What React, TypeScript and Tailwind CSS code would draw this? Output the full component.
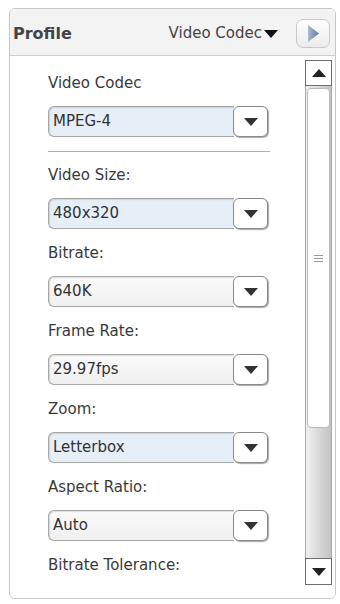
import React from "react";

type Field = {
  label: string;
  value: string;
  blue?: boolean;
};

const FIELDS: Field[] = [
  { label: "Video Size:", value: "480x320", blue: true },
  { label: "Bitrate:", value: "640K" },
  { label: "Frame Rate:", value: "29.97fps" },
  { label: "Zoom:", value: "Letterbox", blue: true },
  { label: "Aspect Ratio:", value: "Auto" },
];

const font = { fontFamily: '"DejaVu Sans", Verdana, sans-serif' };

const DownTriangle: React.FC<{ w?: number; h?: number; color?: string }> = ({
  w = 14,
  h = 8,
  color = "#333",
}) => (
  <svg width={w} height={h} viewBox="0 0 14 8">
    <path d="M0 0 L14 0 L7 8 Z" fill={color} />
  </svg>
);

const Select: React.FC<{ value: string; blue?: boolean }> = ({ value, blue }) => (
  <div className="flex h-[31px] w-[220px]">
    <div
      className={
        "flex-1 flex items-center pl-[4px] rounded-l-[6px] border border-r-0 border-[#a8a8a8] shadow-[inset_1px_1px_1px_rgba(0,0,0,0.12)] text-[15px] text-[#333] " +
        (blue ? "bg-[#e6eef8]" : "bg-gradient-to-b from-[#fbfbfb] to-[#efefef]")
      }
    >
      {value}
    </div>
    <div className="w-[35px] h-full flex items-center justify-center rounded-[6px] border border-[#8a8a8a] bg-white shadow-[1px_1px_1px_rgba(0,0,0,0.35)] -ml-[1px]">
      <DownTriangle />
    </div>
  </div>
);

const Label: React.FC<{ children: React.ReactNode }> = ({ children }) => (
  <div className="h-[20px] leading-[20px] mb-[13px] text-[15px] text-[#3a3a3a] whitespace-nowrap">
    {children}
  </div>
);

const Scrollbar: React.FC = () => (
  <div className="w-[27px] h-[525px] mt-[4px] mr-[3px] flex flex-col shrink-0">
    <div className="h-[26px] border border-[#6f6f6f] bg-white flex items-center justify-center">
      <svg width="14" height="8" viewBox="0 0 14 8">
        <path d="M0 8 L14 8 L7 0 Z" fill="#222" />
      </svg>
    </div>
    <div className="flex-1 flex flex-col border-x border-[#a9a9a9] bg-gradient-to-r from-[#f0f0f0] to-[#c3c3c3]">
      <div className="h-[340px] mt-[2px] mx-[1px] rounded-[4px] border border-[#b9b9b9] bg-white flex items-center justify-center">
        <div className="flex flex-col gap-[2px]">
          <div className="w-[9px] h-px bg-[#9a9a9a]" />
          <div className="w-[9px] h-px bg-[#9a9a9a]" />
          <div className="w-[9px] h-px bg-[#9a9a9a]" />
        </div>
      </div>
    </div>
    <div className="h-[27px] border border-[#6f6f6f] bg-white flex items-center justify-center">
      <DownTriangle color="#222" />
    </div>
  </div>
);

export default function App() {
  return (
    <div className="w-[340px] h-[604px] bg-white pt-[8px] pl-[9px]" style={font}>
      <div className="w-[327px] h-[591px] border border-[#c6c6c6] rounded-[6px] flex flex-col overflow-hidden">
        <div className="h-[47px] shrink-0 bg-[#f3f3f3] border-b border-[#cdcdcd] flex items-center pt-[3px] pl-[3px] pr-[5px]">
          <span className="text-[16px] font-bold text-[#444]">Profile</span>
          <span className="ml-auto flex items-center text-[15px] text-[#444]">
            Video Codec
            <span className="ml-[2px]">
              <DownTriangle w={14} h={8} color="#111" />
            </span>
          </span>
          <button className="ml-[18px] w-[34px] h-[29px] rounded-[7px] border border-[#c9c9c9] bg-gradient-to-b from-white to-[#ececec] flex items-center justify-center">
            <svg width="11" height="17" viewBox="0 0 11 17">
              <defs>
                <linearGradient id="tri" x1="0" y1="0" x2="1" y2="0">
                  <stop offset="0" stopColor="#a9bdd2" />
                  <stop offset="1" stopColor="#5d7b99" />
                </linearGradient>
              </defs>
              <path d="M0 0 L11 8.5 L0 17 Z" fill="url(#tri)" />
            </svg>
          </button>
        </div>
        <div className="flex-1 flex overflow-hidden bg-white">
          <div className="w-[222px] ml-[38px] pt-[17px] flex flex-col">
            <Label>Video Codec</Label>
            <Select value="MPEG-4" blue />
            <div className="h-px w-[222px] bg-[#b3ae98] mt-[14px] mb-[13px]" />
            {FIELDS.map((f) => (
              <div key={f.label} className="mb-[14px]">
                <Label>{f.label}</Label>
                <Select value={f.value} blue={f.blue} />
              </div>
            ))}
            <Label>Bitrate Tolerance:</Label>
          </div>
          <div className="ml-auto">
            <Scrollbar />
          </div>
        </div>
      </div>
    </div>
  );
}
